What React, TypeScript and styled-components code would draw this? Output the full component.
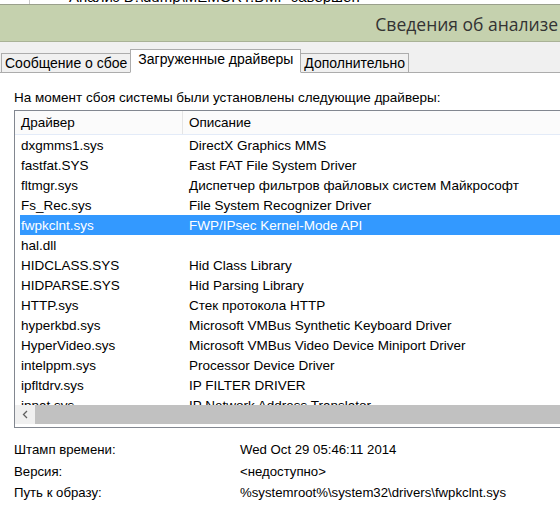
import styled, { createGlobalStyle } from "styled-components";

const GlobalStyle = createGlobalStyle`
    html, body {
        margin: 0;
        padding: 0;
        background: #ffffff;
        overflow: hidden;
    }
    body {
        font-family: "Liberation Sans", Arial, sans-serif;
        color: #000;
    }
`

const Window = styled.div`
    width: 560px;
    height: 511px;
    overflow: hidden;
    display: flex;
    flex-direction: column;
    background: #fff;
`

const TopStrip = styled.div`
    height: 4px;
    overflow: hidden;
    background: #fff;
    border-bottom: 1px solid #9aa08c;
    display: flex;
`

const StripCell = styled.div`
    width: 29px;
    border-right: 1px solid #c8c8c8;
    margin-right: 1px;
    height: 4px;
`

const StripText = styled.div`
    font-size: 15px;
    line-height: 15px;
    margin-top: -11px;
    margin-left: 38px;
    white-space: nowrap;
    color: #000;
`

const Header = styled.div`
    height: 36px;
    background: #c5d1ae;
    border-bottom: 1px solid #a9b296;
    display: flex;
    align-items: center;
    justify-content: flex-end;
    overflow: hidden;
`

const HeaderTitle = styled.div`
    font-family: "Open Sans", "Liberation Sans", sans-serif;
    font-size: 17.5px;
    color: #333;
    white-space: nowrap;
    margin-right: 2px;
    margin-top: 2px;
`

const TabStrip = styled.div`
    background: #f0f0f0;
    height: 30px;
    display: flex;
    align-items: flex-end;
    padding-left: 1px;
    border-bottom: 1px solid #acacac;
`

const Tab = styled.div<{ $active?: boolean }>`
    height: ${p => (p.$active ? "22px" : "18px")};
    padding: 0 ${p => (p.$active ? "7px" : "3px")};
    margin-bottom: ${p => (p.$active ? "-1px" : "0")};
    margin-left: ${p => (p.$active ? "-1px" : "0")};
    margin-right: ${p => (p.$active ? "-1px" : "0")};
    background: ${p => (p.$active ? "#fff" : "#f0f0f0")};
    border: 1px solid #acacac;
    border-bottom: ${p => (p.$active ? "1px solid #fff" : "none")};
    font-size: 14px;
    line-height: ${p => (p.$active ? "18px" : "19px")};
    white-space: nowrap;
    position: relative;
    z-index: ${p => (p.$active ? 1 : 0)};
`

const Page = styled.div`
    padding: 17px 0 0 14px;
    font-size: 13.5px;
`

const Caption = styled.div`
    height: 16px;
    line-height: 16px;
    margin-bottom: 4px;
`

const ListBox = styled.div`
    border: 1px solid #828790;
    border-right: none;
    height: 316px;
    display: flex;
    flex-direction: column;
    overflow: hidden;
`

const HeadRow = styled.div`
    height: 23px;
    flex: none;
    display: flex;
    background: #fbfbfb;
    border-bottom: 1px solid #e3ebf8;
`

const HeadCell = styled.div<{ $w?: number }>`
    width: ${p => (p.$w ? `${p.$w}px` : "auto")};
    flex: ${p => (p.$w ? "none" : "1")};
    padding-left: 6px;
    line-height: 24px;
    border-right: ${p => (p.$w ? "1px solid #e5e5e5" : "none")};
    box-sizing: border-box;
`

const Rows = styled.div`
    height: 270px;
    flex: none;
    overflow: hidden;
`

const Row = styled.div<{ $sel?: boolean }>`
    height: 20px;
    display: flex;
    margin-left: 5px;
    background: ${p => (p.$sel ? "#3399ff" : "transparent")};
    color: ${p => (p.$sel ? "#fff" : "#000")};
    line-height: 21px;
    white-space: nowrap;
`

const Cell = styled.div<{ $w?: number }>`
    width: ${p => (p.$w ? `${p.$w}px` : "auto")};
    flex: ${p => (p.$w ? "none" : "1")};
    padding-left: 1px;
    box-sizing: border-box;
    overflow: hidden;
`

const ScrollBar = styled.div`
    height: 19px;
    flex: none;
    display: flex;
    background: #f0f0f0;
`

const ScrollButton = styled.div`
    width: 20px;
    display: flex;
    align-items: center;
    justify-content: center;
    background: #f0f0f0;
`

const ScrollThumb = styled.div`
    flex: 1;
    background: #c1c1c1;
`

const Details = styled.div`
    padding-top: 11px;
    display: grid;
    grid-template-columns: 226px 1fr;
    grid-auto-rows: 21.5px;
    align-items: center;
    font-size: 13.2px;
`

const drivers: [string, string][] = [
    ["dxgmms1.sys", "DirectX Graphics MMS"],
    ["fastfat.SYS", "Fast FAT File System Driver"],
    ["fltmgr.sys", "Диспетчер фильтров файловых систем Майкрософт"],
    ["Fs_Rec.sys", "File System Recognizer Driver"],
    ["fwpkclnt.sys", "FWP/IPsec Kernel-Mode API"],
    ["hal.dll", ""],
    ["HIDCLASS.SYS", "Hid Class Library"],
    ["HIDPARSE.SYS", "Hid Parsing Library"],
    ["HTTP.sys", "Стек протокола HTTP"],
    ["hyperkbd.sys", "Microsoft VMBus Synthetic Keyboard Driver"],
    ["HyperVideo.sys", "Microsoft VMBus Video Device Miniport Driver"],
    ["intelppm.sys", "Processor Device Driver"],
    ["ipfltdrv.sys", "IP FILTER DRIVER"],
    ["ipnat.sys", "IP Network Address Translator"],
]

export default function App() {
    return (
        <Window>
            <GlobalStyle />
            <TopStrip>
                <StripCell />
                <StripText>Анализ D:\dump\MEMORY.DMP завершен</StripText>
            </TopStrip>
            <Header>
                <HeaderTitle>Сведения об анализе</HeaderTitle>
            </Header>
            <TabStrip>
                <Tab>Сообщение о сбое</Tab>
                <Tab $active>Загруженные драйверы</Tab>
                <Tab>Дополнительно</Tab>
            </TabStrip>
            <Page>
                <Caption>На момент сбоя системы были установлены следующие драйверы:</Caption>
                <ListBox>
                    <HeadRow>
                        <HeadCell $w={168}>Драйвер</HeadCell>
                        <HeadCell>Описание</HeadCell>
                    </HeadRow>
                    <Rows>
                        {drivers.map(([name, desc], i) => (
                            <Row key={name} $sel={i === 4}>
                                <Cell $w={168}>{name}</Cell>
                                <Cell>{desc}</Cell>
                            </Row>
                        ))}
                    </Rows>
                    <ScrollBar>
                        <ScrollButton>
                            <svg width="6" height="9" viewBox="0 0 6 9">
                                <path d="M5 1 L1.5 4.5 L5 8" fill="none" stroke="#606060" strokeWidth="1.3" />
                            </svg>
                        </ScrollButton>
                        <ScrollThumb />
                    </ScrollBar>
                </ListBox>
                <Details>
                    <div>Штамп времени:</div>
                    <div>Wed Oct 29 05:46:11 2014</div>
                    <div>Версия:</div>
                    <div>&lt;недоступно&gt;</div>
                    <div>Путь к образу:</div>
                    <div>%systemroot%\system32\drivers\fwpkclnt.sys</div>
                </Details>
            </Page>
        </Window>
    )
}
